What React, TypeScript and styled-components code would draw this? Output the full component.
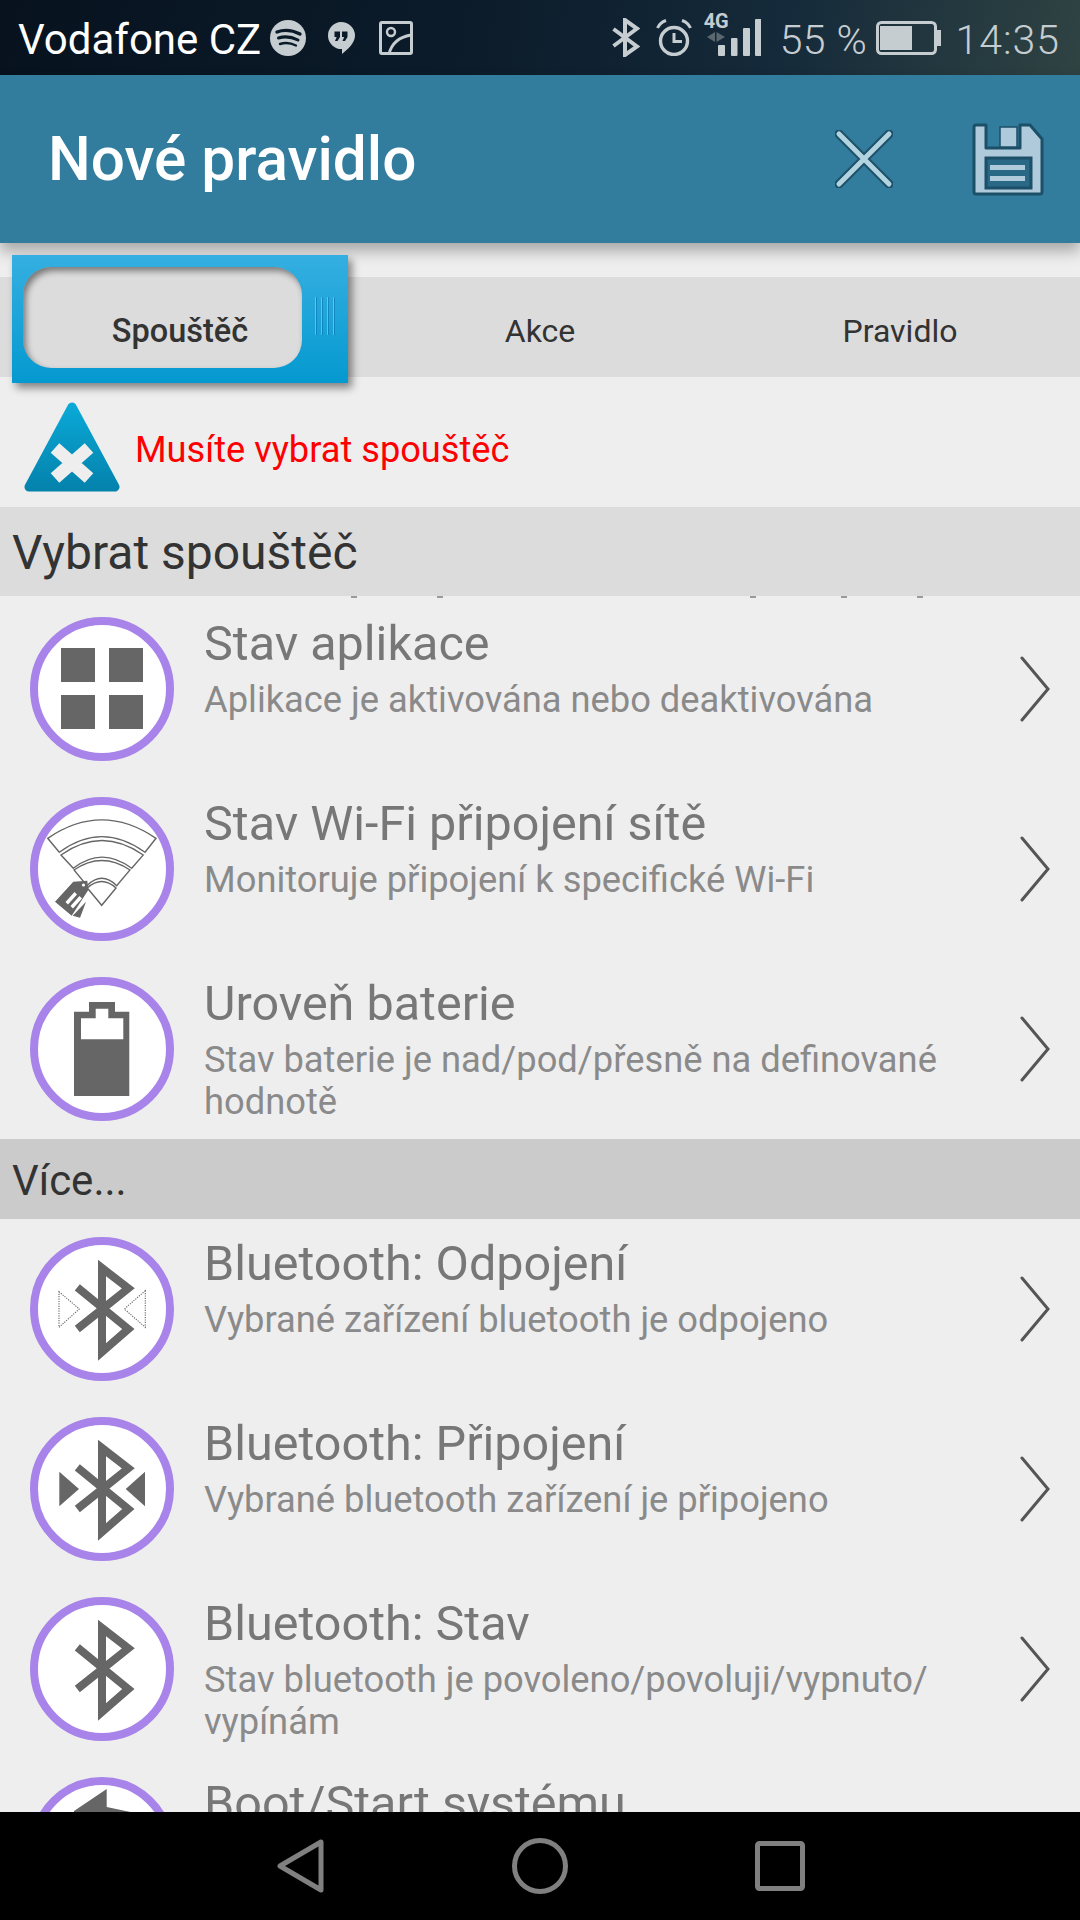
import React from 'react';
import styled, { createGlobalStyle } from 'styled-components';

const GlobalStyle = createGlobalStyle`
  html, body {
    margin: 0;
    padding: 0;
    background: #000;
  }
`;

const Screen = styled.div`
  width: 1080px;
  height: 1920px;
  display: flex;
  flex-direction: column;
  overflow: hidden;
  background: #eeeeee;
  font-family: Roboto, 'Liberation Sans', sans-serif;
`;

const StatusBar = styled.div`
  flex: 0 0 75px;
  display: flex;
  align-items: center;
  padding: 0 20px 0 18px;
  background: linear-gradient(100deg, #07121e 0%, #0c1c2b 45%, #152a3a 72%, #2f4343 100%);
  color: #c6cdd1;
`;

const Carrier = styled.span`
  font-size: 42px;
  color: #fff;
  margin-right: 9px;
  padding-top: 4px;
`;

const StatusIcon = styled.svg<{ $left?: number; $auto?: boolean }>`
  display: block;
  flex: none;
  margin-left: ${(p) => (p.$auto ? 'auto' : `${p.$left ?? 0}px`)};
`;

const SignalBox = styled.div`
  position: relative;
  flex: none;
  width: 57px;
  height: 75px;
  margin-left: 12px;
`;

const NetworkLabel = styled.span`
  position: absolute;
  left: 0;
  top: 10px;
  font-size: 20px;
  font-weight: 700;
  line-height: 22px;
  color: #c6cdd1;
`;

const StatusText = styled.span<{ $left: number; $spacing: number }>`
  font-size: 41px;
  font-weight: 300;
  letter-spacing: ${(p) => p.$spacing}px;
  margin-left: ${(p) => p.$left}px;
  padding-top: 4px;
  white-space: nowrap;
`;

const Header = styled.header`
  position: relative;
  z-index: 2;
  flex: 0 0 168px;
  display: flex;
  align-items: center;
  padding: 0 36px 0 48px;
  background: #327c9e;
  box-shadow: 0 8px 14px rgba(0, 0, 0, 0.3);
`;

const Title = styled.h1`
  margin: 0 auto 0 0;
  font-size: 60.3px;
  font-weight: 500;
  color: #fff;
`;

const ActionIcon = styled.svg<{ $left: number }>`
  display: block;
  flex: none;
  margin-left: ${(p) => p.$left}px;
`;

const TabBar = styled.nav`
  position: relative;
  z-index: 3;
  flex: none;
  display: grid;
  grid-template-columns: repeat(3, 360px);
  height: 100px;
  margin-top: 34px;
  background: #dcdcdc;
`;

const ActiveFrame = styled.div`
  position: absolute;
  left: 12px;
  top: -22px;
  width: 336px;
  height: 128px;
  background: linear-gradient(#35afe1, #0499d0);
  box-shadow: 4px 5px 8px rgba(0, 0, 0, 0.45);
`;

const ActiveWell = styled.div`
  position: absolute;
  left: 11px;
  top: 12px;
  width: 279px;
  height: 101px;
  border-radius: 28px;
  background: #dcdcdc;
  box-shadow: inset 3px 4px 6px rgba(0, 0, 0, 0.45);
`;

const Grip = styled.div`
  position: absolute;
  left: 303px;
  top: 42px;
  width: 20px;
  height: 38px;
  background: repeating-linear-gradient(
    to right,
    rgba(255, 255, 255, 0.3) 0 1px,
    rgba(0, 90, 150, 0.4) 1px 2px,
    transparent 2px 6px
  );
`;

const Tab = styled.div<{ $active?: boolean }>`
  position: relative;
  display: flex;
  align-items: center;
  justify-content: center;
  padding-top: 8px;
  font-size: ${(p) => (p.$active ? 32.5 : 32)}px;
  font-weight: ${(p) => (p.$active ? 500 : 400)};
  color: #333;
`;

const WarningRow = styled.div`
  flex: 0 0 130px;
  box-sizing: border-box;
  display: flex;
  align-items: center;
  padding: 10px 0 0 24px;
`;

const WarningText = styled.span`
  margin-left: 15px;
  font-size: 36.2px;
  color: #ff0000;
  padding-top: 5px;
`;

const SectionTitle = styled.div<{ $dark?: boolean }>`
  flex: none;
  display: flex;
  align-items: center;
  box-sizing: border-box;
  height: ${(p) => (p.$dark ? 80 : 89)}px;
  padding: ${(p) => (p.$dark ? 3 : 1)}px 0 0 12px;
  background: ${(p) => (p.$dark ? '#cbcbcb' : '#dcdcdc')};
  font-size: ${(p) => (p.$dark ? 42 : 48)}px;
  color: #333;
`;

const List = styled.div`
  position: relative;
  flex: 1;
  min-height: 0;
  overflow: hidden;
  padding-top: 3px;
`;

const ClippedMark = styled.span<{ $x: number }>`
  position: absolute;
  top: 0;
  left: ${(p) => p.$x}px;
  width: 6px;
  height: 2px;
  background: #9a9a9a;
`;

const Row = styled.div`
  height: 180px;
  display: flex;
  align-items: center;
  padding: 0 29px 0 30px;
`;

const Badge = styled.div`
  flex: none;
  width: 144px;
  height: 144px;
  box-sizing: border-box;
  border: 8px solid #a783ea;
  border-radius: 50%;
  background: #fff;
  overflow: hidden;
`;

const BadgeIcon = styled.svg`
  display: block;
  margin: -8px;
`;

const RowText = styled.div`
  flex: 1;
  align-self: flex-start;
  margin-left: 30px;
  padding-top: 18px;
`;

const RowTitle = styled.div`
  font-size: 48.5px;
  line-height: 54px;
  color: #777;
`;

const RowSub = styled.div`
  margin-top: 8px;
  font-size: 36.3px;
  line-height: 42px;
  color: #8a8a8a;
`;

const NavBar = styled.div`
  position: relative;
  z-index: 2;
  flex: 0 0 108px;
  display: flex;
  align-items: center;
  padding-left: 277px;
  background: #000;
`;

const NavIcon = styled.svg<{ $left: number }>`
  display: block;
  margin-left: ${(p) => p.$left}px;
`;

function Chevron() {
  return (
    <svg width="32" height="66" viewBox="0 0 32 66" style={{ flex: 'none' }}>
      <path d="M3 2 L29 33 L3 64" fill="none" stroke="#555" strokeWidth="3" strokeLinecap="round" />
    </svg>
  );
}

const BT_PATH = 'M47.3 50.3 L98.3 92 L72 115 L72 31 L98.3 51.3 L47.3 92';

function Bluetooth() {
  return <path d={BT_PATH} fill="none" stroke="#666" strokeWidth="8" strokeMiterlimit="6" />;
}

function IconFrame({ children }: { children: React.ReactNode }) {
  return (
    <Badge>
      <BadgeIcon width="144" height="144" viewBox="0 0 144 144">
        {children}
      </BadgeIcon>
    </Badge>
  );
}

const appsIcon = (
  <IconFrame>
    <g fill="#666">
      <rect x="31" y="31" width="34" height="34" />
      <rect x="79" y="31" width="34" height="34" />
      <rect x="31" y="78" width="34" height="34" />
      <rect x="79" y="78" width="34" height="34" />
    </g>
  </IconFrame>
);

const wifiIcon = (
  <IconFrame>
    <g fill="#fff" stroke="#666" strokeWidth="1.4">
      <path d="M17.7 41.3 Q71.7 4.5 126 41.3 L115 55.3 Q71.7 24 29.3 55.3 Z" />
      <path d="M31 58 Q71.7 29 113.3 58 L101.7 71.3 Q71.7 49 43.3 71.3 Z" />
      <path d="M44 73 Q71.7 54 100 73 L86.7 88.7 Q71.7 74 57 88.7 Z" />
      <path d="M57.3 91 Q71.7 78 86 91 L71.7 108.3 Z" />
    </g>
    <path
      fillRule="evenodd"
      fill="#666"
      d="M25 104.7 L43.3 84.7 L57.3 83.7 L58.3 93 L41.7 118.7 Z M44.5 95 L35.5 105 L38 107.5 L47 97.5 Z M49.5 99 L40.5 109 L43 111.5 L52 101.5 Z"
    />
    <circle cx="53.5" cy="88" r="1.6" fill="#fff" />
    <path d="M42.7 118.7 L56 104.7 L50 120.7 Z" fill="#666" />
  </IconFrame>
);

const batteryIcon = (
  <IconFrame>
    <path fill="#666" d="M44 34.7 H59 V25 H85 V34.7 H99.3 V119 H44 Z" />
    <path fill="#fff" d="M51 41.3 H65.7 V31.7 H78.3 V41.3 H93.3 V62.3 H51 Z" />
  </IconFrame>
);

const btOffIcon = (
  <IconFrame>
    <g fill="none" stroke="#666" strokeWidth="1.1" strokeDasharray="1.2 1.2">
      <path d="M29 54.7 L49.3 72 L29 90.3 Z" />
      <path d="M115.3 53.7 L94.3 72 L115.3 90.3 Z" />
    </g>
    <Bluetooth />
  </IconFrame>
);

const btOnIcon = (
  <IconFrame>
    <g fill="#666">
      <path d="M29.3 54.7 L49 72 L29.3 89.3 Z" />
      <path d="M115 54.7 L95.7 72 L115 89.3 Z" />
    </g>
    <Bluetooth />
  </IconFrame>
);

const btStateIcon = (
  <IconFrame>
    <Bluetooth />
  </IconFrame>
);

const bootIcon = (
  <IconFrame>
    <path d="M76.7 12 V30 L110 37 V70 H44 V34 Z" fill="#666" />
  </IconFrame>
);

type Trigger = { icon: React.ReactNode; title: string; sub: string };

const FIRST: Trigger[] = [
  { icon: appsIcon, title: 'Stav aplikace', sub: 'Aplikace je aktivována nebo deaktivována' },
  { icon: wifiIcon, title: 'Stav Wi-Fi připojení sítě', sub: 'Monitoruje připojení k specifické Wi-Fi' },
  { icon: batteryIcon, title: 'Uroveň baterie', sub: 'Stav baterie je nad/pod/přesně na definované hodnotě' },
];

const MORE: Trigger[] = [
  { icon: btOffIcon, title: 'Bluetooth: Odpojení', sub: 'Vybrané zařízení bluetooth je odpojeno' },
  { icon: btOnIcon, title: 'Bluetooth: Připojení', sub: 'Vybrané bluetooth zařízení je připojeno' },
  { icon: btStateIcon, title: 'Bluetooth: Stav', sub: 'Stav bluetooth je povoleno/povoluji/vypnuto/\u200Bvypínám' },
  { icon: bootIcon, title: 'Boot/Start systému', sub: '' },
];

function TriggerRow({ item }: { item: Trigger }) {
  return (
    <Row>
      {item.icon}
      <RowText>
        <RowTitle>{item.title}</RowTitle>
        <RowSub>{item.sub}</RowSub>
      </RowText>
      <Chevron />
    </Row>
  );
}

export default function App() {
  return (
    <Screen>
      <GlobalStyle />
      <StatusBar>
        <Carrier>Vodafone CZ</Carrier>
        <StatusIcon width="36" height="36" viewBox="0 0 36 36" $left={0}>
          <circle cx="18" cy="18" r="18" fill="#c6cdd1" />
          <g fill="none" stroke="#0b1a28" strokeLinecap="round">
            <path d="M7 12 Q18 8 30 14" strokeWidth="3.4" />
            <path d="M8.5 18 Q18 15 28 20" strokeWidth="3" />
            <path d="M10 24 Q18 21.5 26 25.5" strokeWidth="2.4" />
          </g>
        </StatusIcon>
        <StatusIcon width="28" height="32" viewBox="0 0 28 32" $left={21}>
          <path d="M14 0 A14 13.5 0 0 1 28 13.5 C28 21 21 27 15 32 V27 A13.5 13.5 0 0 1 14 0 Z" fill="#c6cdd1" />
          <g fill="#0b1a28">
            <path d="M7.5 9.5 H13 V15 L10.5 19 H8 L9.7 15 H7.5 Z" />
            <path d="M15 9.5 H20.5 V15 L18 19 H15.5 L17.2 15 H15 Z" />
          </g>
        </StatusIcon>
        <StatusIcon width="34" height="34" viewBox="0 0 34 34" $left={24}>
          <rect x="1.5" y="1.5" width="31" height="31" rx="1.5" fill="none" stroke="#c6cdd1" strokeWidth="3" />
          <circle cx="12" cy="11" r="4" fill="none" stroke="#c6cdd1" strokeWidth="2.4" />
          <path d="M10 33 Q14 17 32 14" fill="none" stroke="#c6cdd1" strokeWidth="2.8" />
        </StatusIcon>
        <StatusIcon width="29" height="39" viewBox="0 0 29 39" $auto>
          <path d="M2.5 11 L26 28.5 L14 37 V2 L26 10.5 L2.5 28" fill="none" stroke="#c6cdd1" strokeWidth="4" />
        </StatusIcon>
        <StatusIcon width="36" height="37" viewBox="0 0 36 37" $left={16}>
          <g fill="none" stroke="#c6cdd1">
            <circle cx="18" cy="22" r="13.5" strokeWidth="3.4" />
            <path d="M18 14 V22.5 H26" strokeWidth="3" />
            <path d="M1.5 9 Q4 3.5 10 1.5" strokeWidth="3" />
            <path d="M34.5 9 Q32 3.5 26 1.5" strokeWidth="3" />
          </g>
        </StatusIcon>
        <SignalBox>
          <NetworkLabel>4G</NetworkLabel>
          <svg width="57" height="75" viewBox="0 0 57 75" style={{ display: 'block' }}>
            <g fill="#5b676e">
              <path d="M11 32 V42 L3 37 Z" />
              <path d="M12.5 32 V42 L21 37 Z" />
            </g>
            <g fill="#c6cdd1">
              <rect x="14" y="45" width="7" height="11" rx="1" />
              <rect x="27" y="38" width="6.5" height="18" rx="1" />
              <rect x="39" y="28" width="7" height="28" rx="1" />
              <rect x="51" y="19" width="6.5" height="37" rx="1" />
            </g>
          </svg>
        </SignalBox>
        <StatusText $left={19} $spacing={0.5}>55 %</StatusText>
        <StatusIcon width="65" height="34" viewBox="0 0 65 34" $left={9}>
          <rect x="1.5" y="1.5" width="58" height="31" rx="4" fill="none" stroke="#c6cdd1" strokeWidth="3" />
          <rect x="4" y="5" width="32" height="24" fill="#c6cdd1" />
          <path d="M61 9 H65 V25 H61 Z" fill="#c6cdd1" />
        </StatusIcon>
        <StatusText $left={14} $spacing={1}>14:35</StatusText>
      </StatusBar>

      <Header>
        <Title>Nové pravidlo</Title>
        <ActionIcon width="58" height="58" viewBox="0 0 58 58" $left={0}>
          <g strokeLinecap="round">
            <path d="M4 4 L54 54 M54 4 L4 54" stroke="#1f5269" strokeWidth="9" />
            <path d="M4 4 L54 54 M54 4 L4 54" stroke="#b2d4e0" strokeWidth="5" />
          </g>
        </ActionIcon>
        <ActionIcon width="72" height="73" viewBox="0 0 72 73" $left={79}>
          <path
            d="M2 4 Q2 2 4 2 H14 V25 H48 V2 H58 L70 16 V69 Q70 71 68 71 H4 Q2 71 2 69 Z"
            fill="#afcbdb"
            stroke="#1c4f68"
            strokeWidth="3"
            strokeLinejoin="round"
          />
          <rect x="28" y="4" width="17" height="20" fill="#afcbdb" stroke="#1c4f68" strokeWidth="1.5" />
          <rect x="14" y="35" width="45" height="30" fill="#2a6985" stroke="#1c4f68" strokeWidth="3" />
          <rect x="18" y="42" width="35" height="5" fill="#afcbdb" />
          <rect x="18" y="53" width="35" height="5" fill="#afcbdb" />
        </ActionIcon>
      </Header>

      <TabBar>
        <ActiveFrame>
          <ActiveWell />
          <Grip />
        </ActiveFrame>
        <Tab $active>Spouštěč</Tab>
        <Tab>Akce</Tab>
        <Tab>Pravidlo</Tab>
      </TabBar>

      <WarningRow>
        <svg width="96" height="90" viewBox="0 0 96 90" style={{ flex: 'none' }}>
          <defs>
            <linearGradient id="warn" x1="0" y1="0" x2="0" y2="1">
              <stop offset="0" stopColor="#0aa8d6" />
              <stop offset="1" stopColor="#0483ad" />
            </linearGradient>
          </defs>
          <path
            d="M48 5 L91 85 H5 Z"
            fill="url(#warn)"
            stroke="url(#warn)"
            strokeWidth="9"
            strokeLinejoin="round"
          />
          <path d="M31 46 L65 76 M65 46 L31 76" stroke="#eeeeee" strokeWidth="13" />
        </svg>
        <WarningText>Musíte vybrat spouštěč</WarningText>
      </WarningRow>

      <SectionTitle>Vybrat spouštěč</SectionTitle>

      <List>
        {[351, 437, 750, 841, 917].map((x) => (
          <ClippedMark key={x} $x={x} />
        ))}
        {FIRST.map((item) => (
          <TriggerRow key={item.title} item={item} />
        ))}
        <SectionTitle $dark>Více...</SectionTitle>
        {MORE.map((item) => (
          <TriggerRow key={item.title} item={item} />
        ))}
      </List>

      <NavBar>
        <NavIcon width="47" height="54" viewBox="0 0 47 54" $left={0}>
          <path d="M44 3 V51 L3 27 Z" fill="none" stroke="#808080" strokeWidth="5" strokeLinejoin="round" />
        </NavIcon>
        <NavIcon width="56" height="56" viewBox="0 0 56 56" $left={188}>
          <circle cx="28" cy="28" r="25.5" fill="none" stroke="#808080" strokeWidth="5" />
        </NavIcon>
        <NavIcon width="50" height="50" viewBox="0 0 50 50" $left={187}>
          <rect x="2.5" y="2.5" width="45" height="45" rx="2" fill="none" stroke="#808080" strokeWidth="5" />
        </NavIcon>
      </NavBar>
    </Screen>
  );
}
